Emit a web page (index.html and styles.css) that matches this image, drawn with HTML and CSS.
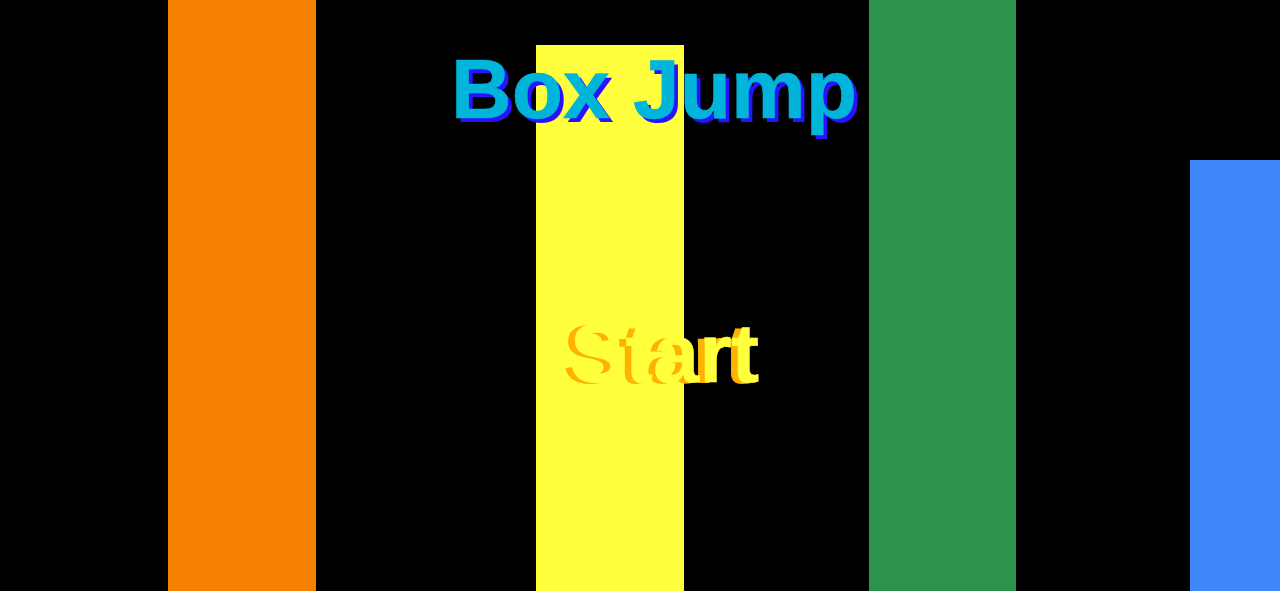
FILE: index.html
```html
<!DOCTYPE html>
<html>
<head>
<meta charset="utf-8">
<link rel="stylesheet" href="styles.css">
</head>
<body>
<div class="game">
  <div class="bar bar-orange"></div>
  <div class="bar bar-yellow"></div>
  <div class="bar bar-green"></div>
  <div class="bar bar-blue"></div>
  <div class="menu">
    <h1 class="title">Box Jump</h1>
    <div class="start">Start</div>
  </div>
</div>
</body>
</html>
```

FILE: styles.css
```css
html, body {
  margin: 0;
  padding: 0;
  background: #000;
}
.game {
  position: relative;
  width: 1280px;
  height: 591px;
  overflow: hidden;
  background: #000;
}
.bar {
  position: absolute;
  bottom: 0;
  width: 148px;
}
.bar-orange { left: 168px; top: 0; background: #f68000; }
.bar-yellow { left: 536px; top: 45px; background: #ffff3d; }
.bar-green { left: 869px; top: 0; width: 147px; background: #2c934a; }
.bar-blue { left: 1190px; top: 160px; width: 90px; background: #3e87fb; }
.menu {
  position: relative;
  display: flex;
  flex-direction: column;
  align-items: flex-start;
  font-family: "Liberation Sans", Arial, sans-serif;
  font-weight: bold;
}
.title {
  margin: 39px 0 0 451px;
  font-size: 84px;
  line-height: 100px;
  color: #00b4da;
  -webkit-text-stroke: 0.6px #00b4da;
  text-shadow: 4px 4px 0 #2a12ff;
  letter-spacing: 0;
}
.start {
  margin: 165px 0 0 570px;
  font-size: 83px;
  line-height: 100px;
  color: #ffff3d;
  -webkit-text-stroke: 0.5px #ffff3d;
  text-shadow: -7px 1px 0 #ffb300;
}
```
